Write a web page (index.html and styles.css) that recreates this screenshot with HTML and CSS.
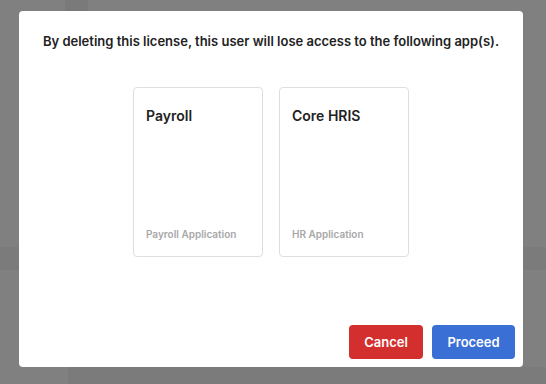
FILE: index.html
```html
<!DOCTYPE html>
<html lang="en">

<head>
    <meta charset="UTF-8" />
    <meta name="viewport" content="width=device-width, initial-scale=1.0" />
    <title>Delete License</title>
    <link rel="stylesheet" href="styles.css">
</head>

<body>
    <div class="backdrop">
        <div class="modal">
            <p class="message">By deleting this license, this user will lose access to the following app(s).</p>

            <div class="apps">
                <div class="app-card">
                    <h3>Payroll</h3>
                    <span class="app-desc">Payroll Application</span>
                </div>
                <div class="app-card">
                    <h3>Core HRIS</h3>
                    <span class="app-desc">HR Application</span>
                </div>
            </div>

            <div class="actions">
                <button class="btn btn-cancel">Cancel</button>
                <button class="btn btn-proceed">Proceed</button>
            </div>
        </div>
    </div>
</body>

</html>
```

FILE: styles.css
```css
/* Reset CSS */
* {
    margin: 0;
    padding: 0;
    box-sizing: border-box;
}

body {
    font-family: Inter, "Noto Sans", sans-serif;
    color: #222;
    background-color: #7f7f7f;
}

/* faint page behind the overlay */
.backdrop {
    width: 546px;
    height: 384px;
    padding: 11px 0 0 19px;
    background:
        linear-gradient(#7a7a7a, #7a7a7a) 65px 0 / 23px 11px no-repeat,
        linear-gradient(#7b7b7b, #7b7b7b) 0 247px / 19px 23px no-repeat,
        linear-gradient(#7b7b7b, #7b7b7b) 523px 247px / 23px 23px no-repeat,
        linear-gradient(#7b7b7b, #7b7b7b) 68px 367px / 478px 17px no-repeat,
        #808080;
}

.modal {
    width: 504px;
    height: 356px;
    background-color: #fff;
    border-radius: 4px;
    padding: 20px 9px 8px 9px;
    display: flex;
    flex-direction: column;
}

.message {
    font-size: 13px;
    font-weight: 600;
    line-height: 20px;
    text-align: center;
    color: #222;
}

.apps {
    margin-top: 36px;
    display: flex;
    justify-content: center;
    gap: 16px;
}

.app-card {
    width: 130px;
    height: 170px;
    border: 1px solid #dedede;
    border-radius: 4px;
    padding: 18px 12px 15px 12px;
    display: flex;
    flex-direction: column;
    justify-content: space-between;
}

.app-card h3 {
    font-size: 14px;
    font-weight: 600;
    line-height: 20px;
    color: #222;
}

.app-desc {
    font-size: 10px;
    font-weight: 600;
    line-height: 14px;
    color: #a8a8a8;
}

.actions {
    margin-top: auto;
    margin-right: -1px;
    display: flex;
    justify-content: flex-end;
    gap: 9px;
}

.btn {
    height: 34px;
    border: none;
    border-radius: 4px;
    color: #fff;
    font-family: Inter, "Noto Sans", sans-serif;
    font-size: 13px;
    font-weight: 600;
    cursor: pointer;
}

.btn-cancel {
    width: 74px;
    background-color: #d32f2f;
}

.btn-proceed {
    width: 83px;
    background-color: #3a6fd6;
}
```
